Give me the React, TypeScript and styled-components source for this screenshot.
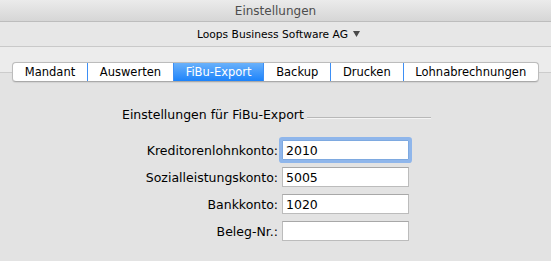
import React from "react";
import styled, { createGlobalStyle } from "styled-components";

const Global = createGlobalStyle`
  html, body { margin: 0; padding: 0; }
  body { font-family: "DejaVu Sans", "Liberation Sans", sans-serif; background: #e3e3e3; }
  * { box-sizing: border-box; }
`;

const Window = styled.div`
  width: 551px;
  height: 261px;
  display: flex;
  flex-direction: column;
  overflow: hidden;
  background: #e3e3e3;
`;

const TitleBar = styled.div`
  height: 22px;
  display: flex;
  align-items: center;
  justify-content: center;
  background: linear-gradient(#ebebeb, #d6d6d6);
  border-bottom: 1px solid #bdbdbd;
  color: #4d4d4d;
  font-size: 12px;
  padding-top: 1px;
`;

const Toolbar = styled.div`
  height: 25px;
  display: flex;
  align-items: center;
  justify-content: center;
  gap: 5px;
  background: #e7e7e7;
  border-bottom: 1px solid #c9c9c9;
  color: #000;
  font-size: 10.7px;
  padding-left: 6px;
`;

const TopArea = styled.div`
  background: #ececec;
  padding-top: 15px;
  display: flex;
  justify-content: center;
`;

const TabStrip = styled.div`
  position: relative;
  z-index: 1;
  display: flex;
  height: 20px;
  margin-bottom: -10px;
  background: #fff;
  border: 1px solid #bcbcbc;
  border-bottom-color: #a9a9a9;
  border-radius: 4px;
  overflow: hidden;
  box-shadow: 0 0.5px 1px rgba(0, 0, 0, 0.08);
`;

const Tab = styled.div<{ $active?: boolean }>`
  display: flex;
  align-items: center;
  padding: 0 11.8px;
  font-size: 11.5px;
  color: ${(p) => (p.$active ? "#fff" : "#000")};
  background: ${(p) => (p.$active ? "linear-gradient(#6ab1fa, #1c83fb)" : "transparent")};
  & + & {
    border-left: 1px solid ${(p) => (p.$active ? "#3d8ff5" : "#dedede")};
  }
`;

const TabView = styled.div`
  flex: 1;
  background: #e3e3e3;
  border-top: 1px solid #cccccc;
  padding: 34px 0 0 122px;
`;

const Group = styled.div`
  width: 309px;
`;

const GroupHeader = styled.div`
  display: flex;
  align-items: flex-end;
  gap: 3px;
  font-size: 12.5px;
  color: #000;
  line-height: 15px;
`;

const HeaderLine = styled.div`
  flex: 1;
  height: 2px;
  margin-bottom: 3px;
  border-top: 1px solid #b8b8b8;
  border-bottom: 1px solid #f4f4f4;
`;

const Form = styled.div`
  display: grid;
  grid-template-columns: 156px 127px;
  column-gap: 4px;
  row-gap: 7px;
  margin-top: 18px;
  align-items: center;
`;

const Label = styled.label`
  text-align: right;
  font-size: 12.5px;
  color: #000;
  white-space: nowrap;
`;

const Input = styled.input<{ $focused?: boolean }>`
  height: 20px;
  width: 127px;
  margin: 0;
  padding: 1px 3px 0;
  font-family: "DejaVu Sans", "Liberation Sans", sans-serif;
  font-size: 12.5px;
  color: #000;
  background: #fff;
  border: 1px solid ${(p) => (p.$focused ? "#7ea9e0" : "#bcbcbc")};
  border-top-color: ${(p) => (p.$focused ? "#7ea9e0" : "#a8a8a8")};
  border-radius: ${(p) => (p.$focused ? "1px" : "0")};
  outline: none;
  box-shadow: ${(p) => (p.$focused ? "0 0 0 3px rgba(128, 174, 236, 0.85)" : "none")};
`;

const tabs = ["Mandant", "Auswerten", "FiBu-Export", "Backup", "Drucken", "Lohnabrechnungen"];

const fields = [
  { label: "Kreditorenlohnkonto:", value: "2010", focused: true },
  { label: "Sozialleistungskonto:", value: "5005" },
  { label: "Bankkonto:", value: "1020" },
  { label: "Beleg-Nr.:", value: "" },
];

export default function App() {
  return (
    <>
      <Global />
      <Window>
        <TitleBar>Einstellungen</TitleBar>
        <Toolbar>
          <span>Loops Business Software AG</span>
          <svg width="7" height="6" viewBox="0 0 7 6">
            <path d="M0 0 H7 L3.5 6 Z" fill="#4a4a4a" />
          </svg>
        </Toolbar>
        <TopArea>
          <TabStrip>
            {tabs.map((t) => (
              <Tab key={t} $active={t === "FiBu-Export"}>
                {t}
              </Tab>
            ))}
          </TabStrip>
        </TopArea>
        <TabView>
          <Group>
            <GroupHeader>
              <span>Einstellungen für FiBu-Export</span>
              <HeaderLine />
            </GroupHeader>
            <Form>
              {fields.map((f) => (
                <React.Fragment key={f.label}>
                  <Label>{f.label}</Label>
                  <Input $focused={f.focused} defaultValue={f.value} readOnly />
                </React.Fragment>
              ))}
            </Form>
          </Group>
        </TabView>
      </Window>
    </>
  );
}
